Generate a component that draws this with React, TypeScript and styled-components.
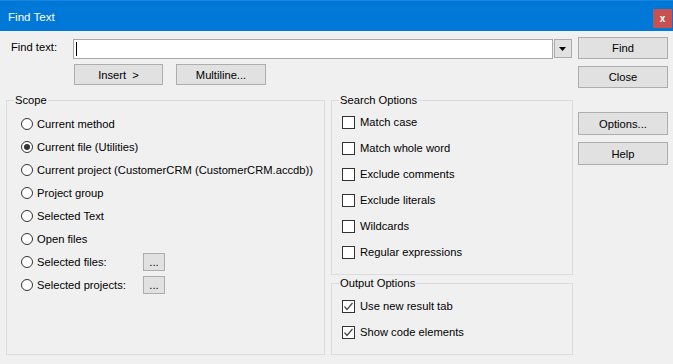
import React from "react";
import styled, { createGlobalStyle } from "styled-components";

const Global = createGlobalStyle`
  html, body { margin: 0; padding: 0; background: #f0f0f0; }
  body { font-family: "Liberation Sans", Arial, sans-serif; font-size: 11.2px; color: #000; }
  * { box-sizing: border-box; }
`;

const Window = styled.div`
  width: 673px;
  height: 364px;
  background: #f0f0f0;
  display: flex;
  flex-direction: column;
  overflow: hidden;
`;

const TitleBar = styled.div`
  height: 31px;
  flex: none;
  background: #0078d7;
  border-top: 1px solid #1a84dc;
  display: flex;
  align-items: center;
  justify-content: space-between;
  padding: 0 1px 0 8px;
  color: #fff;
  font-size: 11.6px;
`;

const CloseBox = styled.div`
  width: 19px;
  height: 19px;
  background: #c75050;
  color: #fff;
  font-weight: bold;
  font-size: 10px;
  display: flex;
  align-items: center;
  justify-content: center;
  margin-top: 4px;
`;

const Body = styled.div`
  flex: 1;
  display: grid;
  grid-template-columns: 566px 90px;
  column-gap: 6px;
  padding: 6px 0 0 6px;
`;

const Main = styled.div`
  display: flex;
  flex-direction: column;
`;

const FindRow = styled.div`
  display: flex;
  align-items: flex-start;
  margin-top: 2px;
  height: 20px;
`;

const FieldLabel = styled.span`
  width: 67px;
  padding-left: 5px;
  line-height: 16px;
`;

const TextInput = styled.div`
  width: 481px;
  height: 20px;
  background: #fff;
  border: 1px solid #a9a9a9;
  padding: 3px 2px;
  display: flex;
  align-items: center;
`;

const Caret = styled.span`
  width: 1px;
  height: 14px;
  background: #000;
`;

const DropButton = styled.div`
  width: 18px;
  height: 19px;
  margin-left: 1px;
  background: #e1e1e1;
  border: 1px solid #acacac;
  display: flex;
  align-items: center;
  justify-content: center;
`;

const ButtonsRow = styled.div`
  display: flex;
  gap: 13px;
  margin-top: 5px;
  padding-left: 68px;
`;

const Button = styled.div<{ $w?: number; $h?: number; $mt?: number }>`
  width: ${(p) => p.$w ?? 90}px;
  height: ${(p) => p.$h ?? 21}px;
  margin-top: ${(p) => p.$mt ?? 0}px;
  background: #e1e1e1;
  border: 1px solid #adadad;
  display: flex;
  align-items: center;
  justify-content: center;
  flex: none;
`;

const Groups = styled.div`
  display: grid;
  grid-template-columns: 319px 242px;
  column-gap: 6px;
  margin-top: 8px;
`;

const RightCol = styled.div`
  display: flex;
  flex-direction: column;
`;

const Group = styled.fieldset<{ $h: number }>`
  margin: 0;
  padding: 0;
  border: 1px solid #dcdcdc;
  height: ${(p) => p.$h}px;
  min-width: 0;
`;

const Legend = styled.legend`
  margin-left: 7px;
  padding: 0 1px;
  line-height: 14px;
`;

const List = styled.div<{ $pt: number; $pl: number }>`
  display: flex;
  flex-direction: column;
  padding: ${(p) => p.$pt}px 0 0 ${(p) => p.$pl}px;
`;

const Row = styled.div<{ $h: number }>`
  height: ${(p) => p.$h}px;
  display: flex;
  align-items: center;
`;

const RadioCircle = styled.span<{ $on?: boolean }>`
  width: 12px;
  height: 12px;
  border-radius: 50%;
  border: 1px solid #333;
  background: #fff;
  display: flex;
  align-items: center;
  justify-content: center;
  flex: none;
  &::after {
    content: "";
    width: 6px;
    height: 6px;
    border-radius: 50%;
    background: ${(p) => (p.$on ? "#333" : "transparent")};
  }
`;

const Box = styled.span`
  width: 13px;
  height: 13px;
  border: 1px solid #333;
  background: #fff;
  flex: none;
  display: flex;
  align-items: center;
  justify-content: center;
`;

const ItemText = styled.span<{ $gap: number; $w?: number }>`
  margin-left: ${(p) => p.$gap}px;
  ${(p) => (p.$w ? `width: ${p.$w}px;` : "")}
  white-space: nowrap;
`;

const SearchCol = styled.div`
  display: flex;
  flex-direction: column;
  gap: 1px;
`;

const Radio = ({ label, on, extra }: { label: string; on?: boolean; extra?: boolean }) => (
  <Row $h={23}>
    <RadioCircle $on={on} />
    <ItemText $gap={4} $w={extra ? 106 : undefined}>{label}</ItemText>
    {extra && <Button $w={22} $h={18}>...</Button>}
  </Row>
);

const Check = ({ label, on }: { label: string; on?: boolean }) => (
  <Row $h={26}>
    <Box>
      {on && (
        <svg width="11" height="11" viewBox="0 0 11 11">
          <path d="M1.5 5.5 L4 8.5 L9.5 2" fill="none" stroke="#444" strokeWidth="1.2" />
        </svg>
      )}
    </Box>
    <ItemText $gap={5}>{label}</ItemText>
  </Row>
);

export default function App() {
  return (
    <>
      <Global />
      <Window>
        <TitleBar>
          <span>Find Text</span>
          <CloseBox>x</CloseBox>
        </TitleBar>
        <Body>
          <Main>
            <FindRow>
              <FieldLabel>Find text:</FieldLabel>
              <TextInput>
                <Caret />
              </TextInput>
              <DropButton>
                <svg width="8" height="4" viewBox="0 0 8 4">
                  <path d="M0 0 H7 L3.5 4 Z" fill="#000" />
                </svg>
              </DropButton>
            </FindRow>
            <ButtonsRow>
              <Button $w={89}>Insert &nbsp;&gt;</Button>
              <Button $w={90}>Multiline...</Button>
            </ButtonsRow>
            <Groups>
              <Group $h={262}>
                <Legend>Scope</Legend>
                <List $pt={5} $pl={14}>
                  <Radio label="Current method" />
                  <Radio label="Current file (Utilities)" on />
                  <Radio label="Current project (CustomerCRM (CustomerCRM.accdb))" />
                  <Radio label="Project group" />
                  <Radio label="Selected Text" />
                  <Radio label="Open files" />
                  <Radio label="Selected files:" extra />
                  <Radio label="Selected projects:" extra />
                </List>
              </Group>
              <SearchCol>
                <Group $h={182}>
                  <Legend>Search Options</Legend>
                  <List $pt={2} $pl={10}>
                    <Check label="Match case" />
                    <Check label="Match whole word" />
                    <Check label="Exclude comments" />
                    <Check label="Exclude literals" />
                    <Check label="Wildcards" />
                    <Check label="Regular expressions" />
                  </List>
                </Group>
                <Group $h={79}>
                  <Legend>Output Options</Legend>
                  <List $pt={3} $pl={10}>
                    <Check label="Use new result tab" on />
                    <Check label="Show code elements" on />
                  </List>
                </Group>
              </SearchCol>
            </Groups>
          </Main>
          <RightCol>
            <Button $h={22}>Find</Button>
            <Button $h={22} $mt={7}>Close</Button>
            <Button $h={23} $mt={24}>Options...</Button>
            <Button $h={23} $mt={7}>Help</Button>
          </RightCol>
        </Body>
      </Window>
    </>
  );
}
